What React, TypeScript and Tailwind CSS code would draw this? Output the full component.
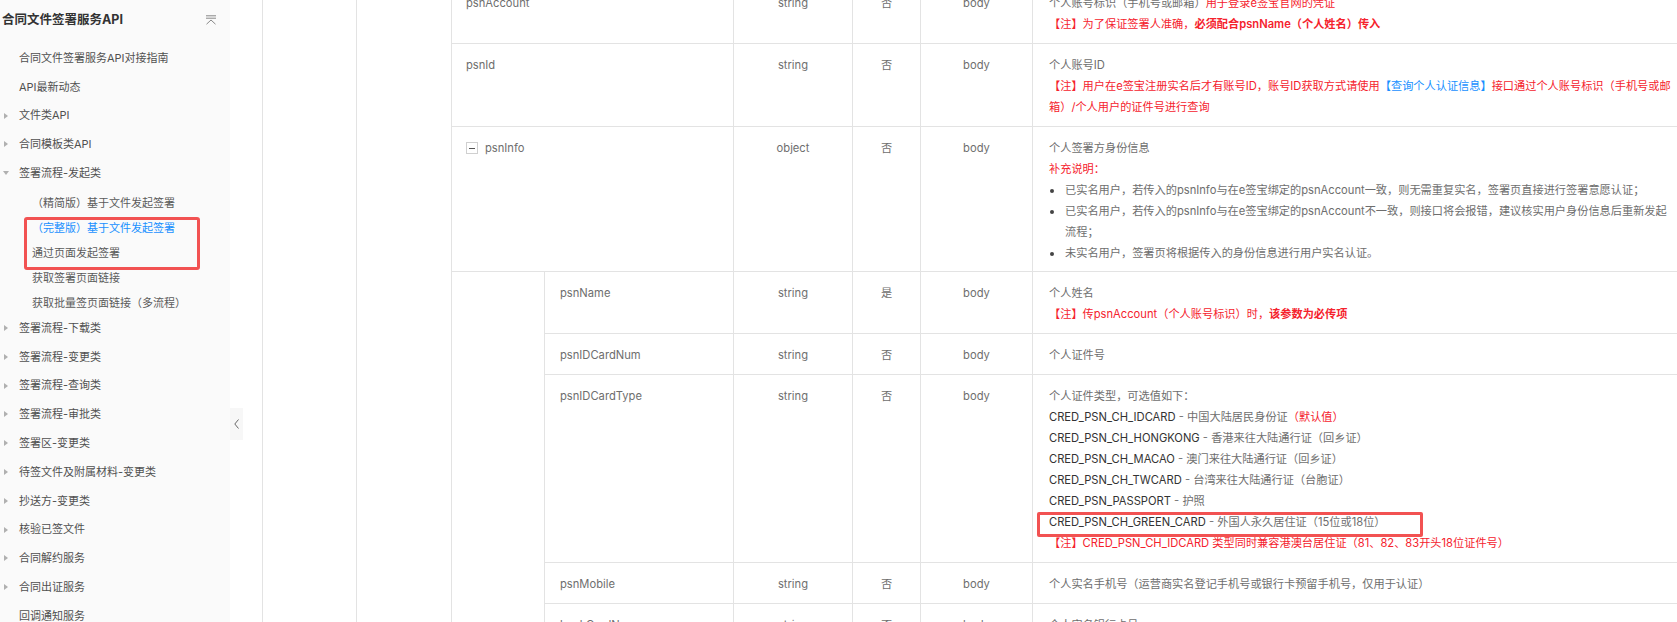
import React from 'react';

const line = 'border-[#e3e3e3]';

const topItems1 = [
  { label: '合同文件签署服务API对接指南', caret: 'none' },
  { label: 'API最新动态', caret: 'none' },
  { label: '文件类API', caret: 'right' },
  { label: '合同模板类API', caret: 'right' },
  { label: '签署流程-发起类', caret: 'down' },
];

const subItems = [
  { label: '（精简版）基于文件发起签署', active: false },
  { label: '（完整版）基于文件发起签署', active: true },
  { label: '通过页面发起签署', active: false },
  { label: '获取签署页面链接', active: false },
  { label: '获取批量签页面链接（多流程）', active: false },
];

const topItems2 = [
  { label: '签署流程-下载类', caret: 'right' },
  { label: '签署流程-变更类', caret: 'right' },
  { label: '签署流程-查询类', caret: 'right' },
  { label: '签署流程-审批类', caret: 'right' },
  { label: '签署区-变更类', caret: 'right' },
  { label: '待签文件及附属材料-变更类', caret: 'right' },
  { label: '抄送方-变更类', caret: 'right' },
  { label: '核验已签文件', caret: 'right' },
  { label: '合同解约服务', caret: 'right' },
  { label: '合同出证服务', caret: 'right' },
  { label: '回调通知服务', caret: 'none' },
];

const Caret = ({ dir }: { dir: string }) => {
  if (dir === 'right')
    return (
      <svg width="4" height="6" viewBox="0 0 4 6" className="absolute left-[4px] top-1/2 -translate-y-1/2">
        <path d="M0 0 L4 3 L0 6 Z" fill="#b0b0b0" />
      </svg>
    );
  if (dir === 'down')
    return (
      <svg width="6" height="4" viewBox="0 0 6 4" className="absolute left-[3px] top-1/2 -translate-y-1/2">
        <path d="M0 0 L6 0 L3 4 Z" fill="#b0b0b0" />
      </svg>
    );
  return null;
};

const TopItem = ({ label, caret }: { label: string; caret: string }) => (
  <div className="relative flex h-[28.8px] items-center pl-[19px] text-[11px] text-[#505050]">
    <Caret dir={caret} />
    <span>{label}</span>
  </div>
);

const Sidebar = () => (
  <div className="relative h-full w-[230px] shrink-0 bg-[#fafafa]">
    <div className="flex h-[40px] items-center justify-between pl-[2px] pr-[13px]">
      <span className="text-[12.5px] font-bold text-[#333]">合同文件签署服务API</span>
      <svg width="12" height="10" viewBox="0 0 12 10">
        <path d="M1 0.8 H11 M1 3.2 H11 M1.5 9.2 L6 5 L10.5 9.2" stroke="#888" strokeWidth="1" fill="none" />
      </svg>
    </div>
    <div className="mt-[3.6px]">
      {topItems1.map((it) => (
        <TopItem key={it.label} {...it} />
      ))}
    </div>
    <div className="mb-[-2px] mt-[3px]">
      {subItems.map((it) => (
        <div
          key={it.label}
          className={`flex h-[25px] items-center pl-[32px] text-[11px] ${it.active ? 'text-[#1890ff]' : 'text-[#5a5a5a]'}`}
        >
          {it.label}
        </div>
      ))}
    </div>
    <div>
      {topItems2.map((it) => (
        <TopItem key={it.label} {...it} />
      ))}
    </div>
    <div className="absolute left-[24px] top-[217px] h-[53px] w-[176px] rounded-[3px] border-[3px] border-[#f25252]" />
  </div>
);

const Cells = ({
  type = 'string',
  req = '否',
  loc = 'body',
  children,
}: {
  type?: string;
  req?: string;
  loc?: string;
  children?: React.ReactNode;
}) => (
  <>
    <div className={`w-[119px] shrink-0 border-l ${line} pt-[11px] text-center`}>{type}</div>
    <div className={`w-[68px] shrink-0 border-l ${line} pt-[11px] text-center`}>{req}</div>
    <div className={`w-[112px] shrink-0 border-l ${line} pt-[11px] text-center`}>{loc}</div>
    <div className={`min-w-0 flex-1 whitespace-nowrap border-l ${line} pl-[16px] pt-[11px]`}>{children}</div>
  </>
);

const Red = ({ children, bold }: { children: React.ReactNode; bold?: boolean }) => (
  <span className={`text-[#f5222d] ${bold ? 'font-semibold' : ''}`}>{children}</span>
);

const Bullet = ({ children }: { children: React.ReactNode }) => (
  <div className="flex">
    <div className="flex w-[16px] shrink-0 justify-start pl-[1px] pt-[9px]">
      <div className="h-[4px] w-[4px] rounded-full bg-[#444]" />
    </div>
    <div>{children}</div>
  </div>
);

const Cred = ({ code, children }: { code: string; children: React.ReactNode }) => (
  <div>
    <span className="text-[#333]">{code}</span>
    <span className="text-[#777]"> - </span>
    {children}
  </div>
);

const Table = () => (
  <div className={`-mt-[18px] border-l ${line} text-[11.2px] leading-[21px] text-[#6e6e6e]`}>
    <div className={`flex h-[62px] border-b ${line}`}>
      <div className="w-[281px] shrink-0 pl-[14px] pt-[11px]">psnAccount</div>
      <Cells>
        <div>
          个人账号标识（手机号或邮箱）<Red>用于登录e签宝官网的凭证</Red>
        </div>
        <div>
          <Red>【注】为了保证签署人准确，</Red>
          <Red bold>必须配合psnName（个人姓名）传入</Red>
        </div>
      </Cells>
    </div>
    <div className={`flex h-[83px] border-b ${line}`}>
      <div className="w-[281px] shrink-0 pl-[14px] pt-[11px]">psnId</div>
      <Cells>
        <div>个人账号ID</div>
        <div>
          <Red>【注】用户在e签宝注册实名后才有账号ID，账号ID获取方式请使用</Red>
          <span className="text-[#1890ff]">【查询个人认证信息】</span>
          <Red>接口通过个人账号标识（手机号或邮</Red>
        </div>
        <div>
          <Red>箱）/个人用户的证件号进行查询</Red>
        </div>
      </Cells>
    </div>
    <div className={`flex h-[145px] border-b ${line}`}>
      <div className="flex w-[281px] shrink-0 items-start pl-[14px] pt-[11px]">
        <div className="mr-[7px] mt-[4px] flex h-[12px] w-[12px] items-center justify-center border border-[#d0d0d0] bg-white">
          <div className="h-[1px] w-[6px] bg-[#555]" />
        </div>
        <span>psnInfo</span>
      </div>
      <Cells type="object">
        <div>个人签署方身份信息</div>
        <div>
          <Red>补充说明：</Red>
        </div>
        <Bullet>已实名用户，若传入的psnInfo与在e签宝绑定的psnAccount一致，则无需重复实名，签署页直接进行签署意愿认证；</Bullet>
        <Bullet>
          已实名用户，若传入的psnInfo与在e签宝绑定的psnAccount不一致，则接口将会报错，建议核实用户身份信息后重新发起
          <br />
          流程；
        </Bullet>
        <Bullet>未实名用户，签署页将根据传入的身份信息进行用户实名认证。</Bullet>
      </Cells>
    </div>
    <div className="flex">
      <div className="w-[92px] shrink-0" />
      <div className={`min-w-0 flex-1 border-l ${line}`}>
        <div className={`flex h-[62px] border-b ${line}`}>
          <div className="w-[188px] shrink-0 pl-[15px] pt-[11px]">psnName</div>
          <Cells req="是">
            <div>个人姓名</div>
            <div>
              <Red>【注】传psnAccount（个人账号标识）时，</Red>
              <Red bold>该参数为必传项</Red>
            </div>
          </Cells>
        </div>
        <div className={`flex h-[41px] border-b ${line}`}>
          <div className="w-[188px] shrink-0 pl-[15px] pt-[11px]">psnIDCardNum</div>
          <Cells>
            <div>个人证件号</div>
          </Cells>
        </div>
        <div className={`flex h-[188px] border-b ${line}`}>
          <div className="w-[188px] shrink-0 pl-[15px] pt-[11px]">psnIDCardType</div>
          <Cells>
            <div>个人证件类型，可选值如下：</div>
            <Cred code="CRED_PSN_CH_IDCARD">
              中国大陆居民身份证<Red>（默认值）</Red>
            </Cred>
            <Cred code="CRED_PSN_CH_HONGKONG">香港来往大陆通行证（回乡证）</Cred>
            <Cred code="CRED_PSN_CH_MACAO">澳门来往大陆通行证（回乡证）</Cred>
            <Cred code="CRED_PSN_CH_TWCARD">台湾来往大陆通行证（台胞证）</Cred>
            <Cred code="CRED_PSN_PASSPORT">护照</Cred>
            <div className="relative">
              <Cred code="CRED_PSN_CH_GREEN_CARD">外国人永久居住证（15位或18位）</Cred>
              <div className="absolute -left-[12px] top-[0px] h-[25px] w-[386px] rounded-[2px] border-[3px] border-[#f25252]" />
            </div>
            <div>
              <Red>【注】CRED_PSN_CH_IDCARD 类型同时兼容港澳台居住证（81、82、83开头18位证件号）</Red>
            </div>
          </Cells>
        </div>
        <div className={`flex h-[41px] border-b ${line}`}>
          <div className="w-[188px] shrink-0 pl-[15px] pt-[11px]">psnMobile</div>
          <Cells>
            <div>个人实名手机号（运营商实名登记手机号或银行卡预留手机号，仅用于认证）</div>
          </Cells>
        </div>
        <div className={`flex h-[60px] border-b ${line}`}>
          <div className="w-[188px] shrink-0 pl-[15px] pt-[11px]">bankCardNum</div>
          <Cells>
            <div>个人实名银行卡号</div>
          </Cells>
        </div>
      </div>
    </div>
  </div>
);

export default function App() {
  return (
    <div className="relative flex h-[622px] w-[1677px] overflow-hidden bg-white font-[Inter,'Noto_Sans_CJK_SC',sans-serif]">
      <Sidebar />
      <div className="flex h-full min-w-0 flex-1">
        <div className="w-[32px] shrink-0" />
        <div className={`w-[94px] shrink-0 border-l ${line}`} />
        <div className={`w-[95px] shrink-0 border-l ${line}`} />
        <div className="min-w-0 flex-1">
          <Table />
        </div>
      </div>
      <div className="absolute left-[230px] top-[408px] flex h-[32px] w-[13px] items-center justify-center bg-[#f7f7f7]">
        <svg width="5" height="10" viewBox="0 0 5 10">
          <path d="M4.5 0.5 L0.8 5 L4.5 9.5" stroke="#666" strokeWidth="1" fill="none" />
        </svg>
      </div>
    </div>
  );
}
